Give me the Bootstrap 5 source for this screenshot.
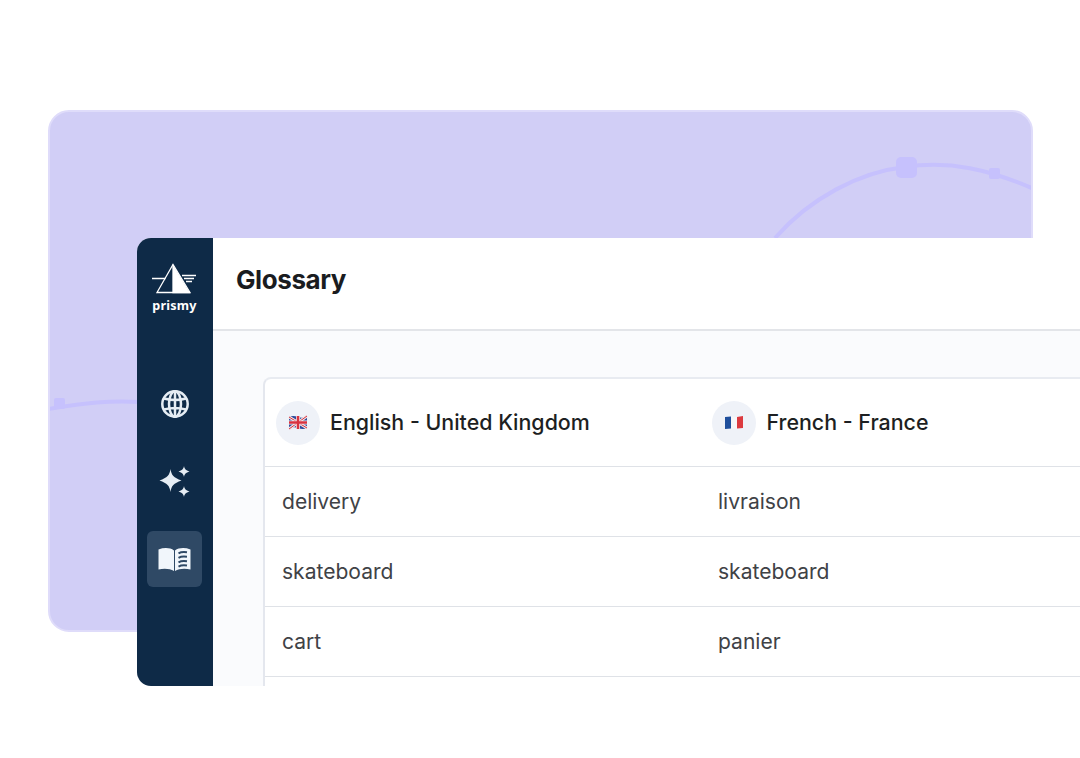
<!doctype html>
<html lang="en"><head><meta charset="utf-8"><title>Glossary</title>
<link href="https://cdn.jsdelivr.net/npm/bootstrap@5.3.0/dist/css/bootstrap.min.css" rel="stylesheet">
<style>
html,body{height:758px;overflow:hidden;background:#fff;}
body{font-family:Inter,"Liberation Sans",sans-serif;}
.stage{position:relative;width:1080px;height:758px;overflow:hidden;padding:110px 47px 126px 48px;}
.backdrop{height:100%;background:#d1cef6;border:2px solid #dfdcfa;border-radius:21px;overflow:hidden;}
.backdrop svg{display:block;margin:-2px;}
.appwin{position:absolute;left:137px;top:238px;width:943px;height:448px;border-radius:14px 0 0 14px;overflow:hidden;background:#fafbfd;}
.rail{width:76px;background:#0e2a47;padding:25px 1px 0 0;}
.rail-logo{color:#fff;font-family:"Noto Sans",sans-serif;font-weight:700;font-size:12.6px;line-height:15px;letter-spacing:.2px;}
.rail-logo svg{display:block;margin-bottom:4px;}
.rail-nav{margin-top:63px;gap:21.5px;}
.rail-btn{width:55px;height:56px;border-radius:6px;}
.rail-btn.on{background:#2f4965;}
.topbar{height:93px;background:#fff;border-bottom:2px solid #e3e5e9;padding:0 0 8px 23px;}
.topbar h1{font-size:26px;font-weight:650;letter-spacing:-.42px;color:#1a1c1f;margin:0;}
.tablewrap{padding:46px 0 0 50px;}
.gloss{border-top:2px solid #e8ebf1;border-left:2px solid #e4e7ee;border-top-left-radius:8px;background:#fff;height:400px;}
.gloss-row{display:grid;grid-template-columns:437px 1fr;height:70px;border-bottom:1px solid #dfe2e7;align-items:center;font-size:21.05px;color:#3f4246;}
.gloss-row>div{padding-left:16px;}
.gloss-row>div:first-child{padding-left:17px;}
.gloss-head{height:88px;color:#1d1f22;font-size:21.4px;font-weight:500;}
.gloss-head>div,.gloss-head>div:first-child{padding-left:10px;display:flex;align-items:center;gap:10.5px;}
.gloss-head>div:first-child{padding-left:10.500px;}
.flag-dot{width:44px;height:44px;border-radius:50%;background:#eff2f8;}
</style></head><body>
<div class="stage">
  <div class="backdrop">
    <svg width="985" height="522" viewBox="48 110 985 522" fill="none" aria-hidden="true">
      <path d="M48 409C85 403 110 400 140 402" stroke="#c6c1fd" stroke-width="4"/>
      <rect x="54" y="398" width="11" height="11" rx="2" fill="#c6c1fd"/>
      <path d="M775 238C810 198 860 172 905 167C950 160 990 170 1034 189" stroke="#c6c1fd" stroke-width="4"/>
      <rect x="896" y="157" width="21" height="21" rx="5" fill="#c6c1fd"/>
      <rect x="989" y="168" width="11" height="11" rx="2" fill="#c6c1fd"/>
    </svg>
  </div>
  <div class="appwin d-flex">
    <aside class="rail d-flex flex-column align-items-center flex-shrink-0">
      <div class="rail-logo d-flex flex-column align-items-center">
        <svg width="44" height="31" viewBox="0 0 44 31" fill="none" stroke="#fff" stroke-width="1.3" aria-hidden="true">
          <path d="M21 1.500L5 29.500H38Z"/><path d="M21 3V29.500H37Z" fill="#fff"/>
          <path d="M0 15.500H13.500M30 12.500H44M32 15.500H42M34 18.500H40"/>
        </svg>
        <span>prismy</span>
      </div>
      <nav class="rail-nav d-flex flex-column align-items-center">
        <div class="rail-btn d-flex align-items-center justify-content-center">
          <svg width="30" height="30" viewBox="0 0 30 30" fill="none" stroke="#e6edf4" stroke-width="2.500" aria-hidden="true">
            <circle cx="15" cy="15" r="12.700"/><ellipse cx="15" cy="15" rx="6" ry="12.700"/>
            <path d="M15 2.300V27.700M4 9.500Q15 12.500 26 9.500M4 20.500Q15 17.500 26 20.500"/>
          </svg>
        </div>
        <div class="rail-btn d-flex align-items-center justify-content-center">
          <svg width="31" height="31" viewBox="0 0 31 31" fill="#e6edf4" aria-hidden="true">
            <path d="M11.500 3C12.500 9.500 14.500 11.500 22.500 14.500C14.500 17.500 12.500 19.500 11.500 26C10.500 19.500 8.500 17.500 .500 14.500C8.500 11.500 10.500 9.500 11.500 3Z"/>
            <path d="M25 0C25.700 3.300 26.700 4.300 30.500 5.500C26.700 6.700 25.700 7.700 25 11C24.300 7.700 23.300 6.700 19.500 5.500C23.300 4.300 24.300 3.300 25 0Z"/>
            <path d="M25 20C25.700 23.300 26.700 24.300 30.500 25.500C26.700 26.700 25.700 27.700 25 31C24.300 27.700 23.300 26.700 19.500 25.500C23.300 24.300 24.300 23.300 25 20Z"/>
          </svg>
        </div>
        <div class="rail-btn on d-flex align-items-center justify-content-center">
          <svg width="33" height="25" viewBox="0 0 33 25" aria-hidden="true">
            <path d="M.500 2.500C6 .500 12 .500 16 3.500V24C12 21.500 6 21 .500 22.500Z" fill="#f1f6fb"/>
            <path d="M17 3.500C21 .500 27 .500 32.500 2.500V22.500C27 21 21 21.500 17 24Z" fill="#f1f6fb"/>
            <path d="M20.500 6.300C22.500 5.200 25.500 4.800 29 5.300M20.500 10.800C22.500 9.700 25.500 9.300 29 9.800M20.500 15.300C22.500 14.200 25.500 13.800 29 14.300M20.500 19.600C22.500 18.500 25.500 18.100 29 18.600" stroke="#2f4965" stroke-width="2" fill="none"/>
          </svg>
        </div>
      </nav>
    </aside>
    <main class="flex-grow-1 d-flex flex-column">
      <header class="topbar d-flex align-items-center flex-shrink-0"><h1>Glossary</h1></header>
      <div class="tablewrap">
        <div class="gloss">
          <div class="gloss-row gloss-head">
            <div>
              <span class="flag-dot d-flex align-items-center justify-content-center">
                <svg width="20" height="15" viewBox="0 0 20 15" aria-hidden="true">
                  <path d="M1 2Q5 0 10 2T19 1V13Q15 15 10 13T1 14Z" fill="#2d4a9a"/>
                  <path d="M1 2L19 13M19 1L1 14" stroke="#f0e4e6" stroke-width="3"/>
                  <path d="M1 2L19 13M19 1L1 14" stroke="#d8323f" stroke-width="1"/>
                  <path d="M10 1V14M1 7.500H19" stroke="#f3eaec" stroke-width="4"/>
                  <path d="M10 1V14M1 7.500H19" stroke="#d8323f" stroke-width="2.500"/>
                </svg>
              </span>
              <span>English - United Kingdom</span>
            </div>
            <div>
              <span class="flag-dot d-flex align-items-center justify-content-center">
                <svg width="20" height="15" viewBox="0 0 20 15" aria-hidden="true">
                  <path d="M1 2L7 1.500V13.500L1 14Z" fill="#1f4f9c"/>
                  <path d="M7 1.500L13 2V13.500L7 13.500Z" fill="#f6f6f8"/>
                  <path d="M13 2L19 1V13L13 13.500Z" fill="#dc3a3f"/>
                </svg>
              </span>
              <span>French - France</span>
            </div>
          </div>
          <div class="gloss-row"><div>delivery</div><div>livraison</div></div>
          <div class="gloss-row"><div>skateboard</div><div>skateboard</div></div>
          <div class="gloss-row"><div>cart</div><div>panier</div></div>
        </div>
      </div>
    </main>
  </div>
</div>
<script src="https://cdn.jsdelivr.net/npm/bootstrap@5.3.0/dist/js/bootstrap.bundle.min.js"></script>
</body></html>
